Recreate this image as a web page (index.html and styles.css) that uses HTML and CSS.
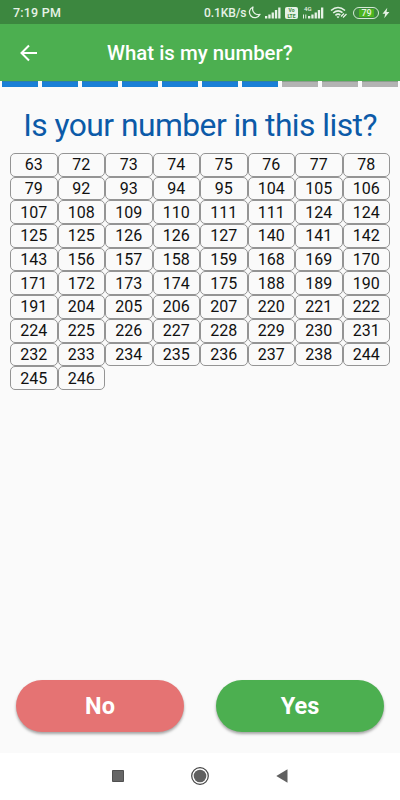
FILE: index.html
```
<!DOCTYPE html>
<html lang="en">
<head>
  <meta charset="UTF-8">
  <meta name="viewport" content="width=device-width, initial-scale=1.0">
  <title>What is my number?</title>
  <link rel="stylesheet" href="styles.css">
</head>
<body>
  <div class="status-bar">
    <span class="time">7:19 PM</span>
    <div class="status-icons">
      <span class="speed">0.1KB/s</span>
      <svg class="moon" width="13" height="13" viewBox="0 0 13 13"><path d="M5 1A5.5 5.5 0 1 0 12 8.3A5.6 5.6 0 0 1 5 1Z" fill="none" stroke="currentColor" stroke-width="1.3" stroke-linejoin="round"/></svg>
      <svg class="signal" width="16" height="12" viewBox="0 0 16 12"><path d="M0 9h2.3v2.5H0zM3.3 7.5h2.3v4H3.3zM6.6 5.5h2.3v6H6.6zM9.9 3h2.3v8.5H9.9zM13.2 0.5h2.3v11h-2.3z" fill="currentColor"/></svg>
      <span class="volte"><span>Vo</span><span>LTE</span></span>
      <span class="mobile">
        <span class="net">4G</span>
        <svg width="22" height="12" viewBox="0 0 22 12"><path d="M1.5 7.5v4M3.8 7.5v4" stroke="currentColor"/><path d="M6 9h2.3v2.5H6zM9.3 7.5h2.3v4H9.3zM12.6 5.5h2.3v6h-2.3zM15.8 3h2.3v8.5h-2.3zM19 0.5h2.3v11H19z" fill="currentColor"/></svg>
      </span>
      <svg class="wifi" width="18" height="13" viewBox="0 0 18 13"><path d="M1 4.5Q8 -1.5 15 4.5M3.2 7Q8 3 12.5 6.7M5.4 9.3Q8 7.2 10.3 9" fill="none" stroke="currentColor" stroke-width="1.6"/><path d="M8 12.3L6.5 10.8Q8 9.6 9.5 10.8Z" fill="currentColor"/><path d="M11 10.5l3-3M13 11.5l3.5-3.5" stroke="currentColor" stroke-width="1.3"/></svg>
      <span class="battery"><span class="level">79</span></span>
      <svg class="bolt" width="8" height="12" viewBox="0 0 8 12"><path d="M5.3 0.7L0.5 6.7H3.2L2.2 11.3L7.4 5H4.5Z" fill="currentColor"/></svg>
    </div>
  </div>

  <header class="app-bar">
    <button class="back" aria-label="Back">
      <svg width="18" height="18" viewBox="0 0 18 18"><path d="M17 9H2M9 1.5L1.5 9L9 16.5" fill="none" stroke="currentColor" stroke-width="2"/></svg>
    </button>
    <h1>What is my number?</h1>
  </header>

  <div class="steps">
    <span class="step done"></span>
    <span class="step done"></span>
    <span class="step done"></span>
    <span class="step done"></span>
    <span class="step done"></span>
    <span class="step done"></span>
    <span class="step done"></span>
    <span class="step"></span>
    <span class="step"></span>
    <span class="step"></span>
  </div>

  <main>
    <h2>Is your number in this list?</h2>
    <div class="numbers">
      <span>63</span><span>72</span><span>73</span><span>74</span><span>75</span><span>76</span><span>77</span><span>78</span>
      <span>79</span><span>92</span><span>93</span><span>94</span><span>95</span><span>104</span><span>105</span><span>106</span>
      <span>107</span><span>108</span><span>109</span><span>110</span><span>111</span><span>111</span><span>124</span><span>124</span>
      <span>125</span><span>125</span><span>126</span><span>126</span><span>127</span><span>140</span><span>141</span><span>142</span>
      <span>143</span><span>156</span><span>157</span><span>158</span><span>159</span><span>168</span><span>169</span><span>170</span>
      <span>171</span><span>172</span><span>173</span><span>174</span><span>175</span><span>188</span><span>189</span><span>190</span>
      <span>191</span><span>204</span><span>205</span><span>206</span><span>207</span><span>220</span><span>221</span><span>222</span>
      <span>224</span><span>225</span><span>226</span><span>227</span><span>228</span><span>229</span><span>230</span><span>231</span>
      <span>232</span><span>233</span><span>234</span><span>235</span><span>236</span><span>237</span><span>238</span><span>244</span>
      <span>245</span><span>246</span>
    </div>
  </main>

  <div class="answers">
    <button class="answer no">No</button>
    <button class="answer yes">Yes</button>
  </div>

  <nav class="nav-bar">
    <svg width="12" height="12" viewBox="0 0 12 12"><path d="M0.5 0.5h11v11H0.5z" fill="#666" stroke="#505050"/></svg>
    <svg width="18" height="18" viewBox="0 0 18 18"><circle cx="9" cy="9" r="8.3" fill="none" stroke="#444" stroke-width="1.2"/><circle cx="9" cy="9" r="6.3" fill="#606060"/></svg>
    <svg width="12" height="14" viewBox="0 0 12 14"><path d="M0.3 7L11.5 0.3V13.7Z" fill="#606060"/></svg>
  </nav>
</body>
</html>
```

FILE: styles.css
```
* {
  box-sizing: border-box;
}

body {
  margin: 0;
  height: 800px;
  display: flex;
  flex-direction: column;
  font-family: Roboto, "Liberation Sans", sans-serif;
  background-color: #fafafa;
  color: #111;
  overflow: hidden;
}

button {
  border: none;
  padding: 0;
  font-family: inherit;
  color: white;
  cursor: pointer;
}

svg {
  display: block;
  flex-shrink: 0;
}

.status-bar {
  height: 24px;
  padding: 1px 10px 0 13px;
  display: flex;
  align-items: center;
  justify-content: space-between;
  background-color: #3c873f;
  color: #e6f2e6;
  font-weight: 500;
}

.time {
  font-size: 12.5px;
  letter-spacing: 0.2px;
}

.status-icons {
  display: flex;
  align-items: center;
}

.speed {
  font-size: 12px;
  letter-spacing: -0.1px;
  width: 44px;
}

.signal {
  margin-left: 4px;
}

.volte {
  width: 13px;
  height: 12px;
  margin-left: 4px;
  border-radius: 2px;
  background-color: #e6f2e6;
  color: #3c873f;
  display: flex;
  flex-direction: column;
  align-items: center;
  justify-content: center;
  font-size: 5px;
  line-height: 6px;
  font-weight: 700;
}

.mobile {
  position: relative;
  margin-left: 4px;
}

.net {
  position: absolute;
  top: -1px;
  left: 2px;
  font-size: 6px;
  line-height: 6px;
}

.wifi {
  margin-left: 6px;
}

.battery {
  width: 26px;
  height: 12px;
  margin: 0 3px 0 5px;
  padding: 1px 4px 1px 5px;
  border: 1px solid #d5ead5;
  border-radius: 6px;
}

.level {
  display: block;
  height: 8px;
  background-color: #4bb51f;
  font-size: 9px;
  line-height: 9px;
  text-align: center;
}

.app-bar {
  height: 57px;
  display: flex;
  align-items: center;
  background-color: #4caf50;
  color: white;
}

.back {
  display: flex;
  margin-left: 20px;
  background: none;
}

.app-bar h1 {
  margin: 0 0 0 69px;
  font-size: 20.4px;
  font-weight: 500;
}

.steps {
  display: flex;
  gap: 4px;
  padding: 0 2px;
}

.step {
  flex: 1;
  height: 6px;
  background-color: #b3b3b3;
  border-top: 1px solid #8d9d8e;
}

.step.done {
  background-color: #1a7fd6;
  border-top-color: #2b7db0;
}

main {
  flex: 1;
  padding: 0 10px;
}

h2 {
  margin: 19px 0 9px;
  font-size: 31.8px;
  line-height: 38px;
  font-weight: 400;
  letter-spacing: -0.54px;
  text-align: center;
  white-space: nowrap;
  color: #0c5aa8;
}

.numbers {
  display: grid;
  grid-template-columns: repeat(8, 1fr);
  grid-auto-rows: 23.7px;
}

.numbers span {
  display: flex;
  align-items: center;
  justify-content: center;
  border: 1px solid #949494;
  border-radius: 5px;
  font-size: 16px;
}

.answers {
  display: flex;
  gap: 32px;
  padding: 0 16px 21px;
}

.answer {
  flex: 1;
  height: 52px;
  border-radius: 26px;
  font-size: 23.5px;
  font-weight: 700;
  box-shadow: 0 2px 3px rgba(0, 0, 0, 0.35);
}

.no {
  background-color: #e57373;
}

.yes {
  background-color: #4caf50;
}

.nav-bar {
  height: 47px;
  display: flex;
  align-items: center;
  justify-content: center;
  gap: 67px;
  padding-bottom: 1px;
  background-color: white;
}
```
